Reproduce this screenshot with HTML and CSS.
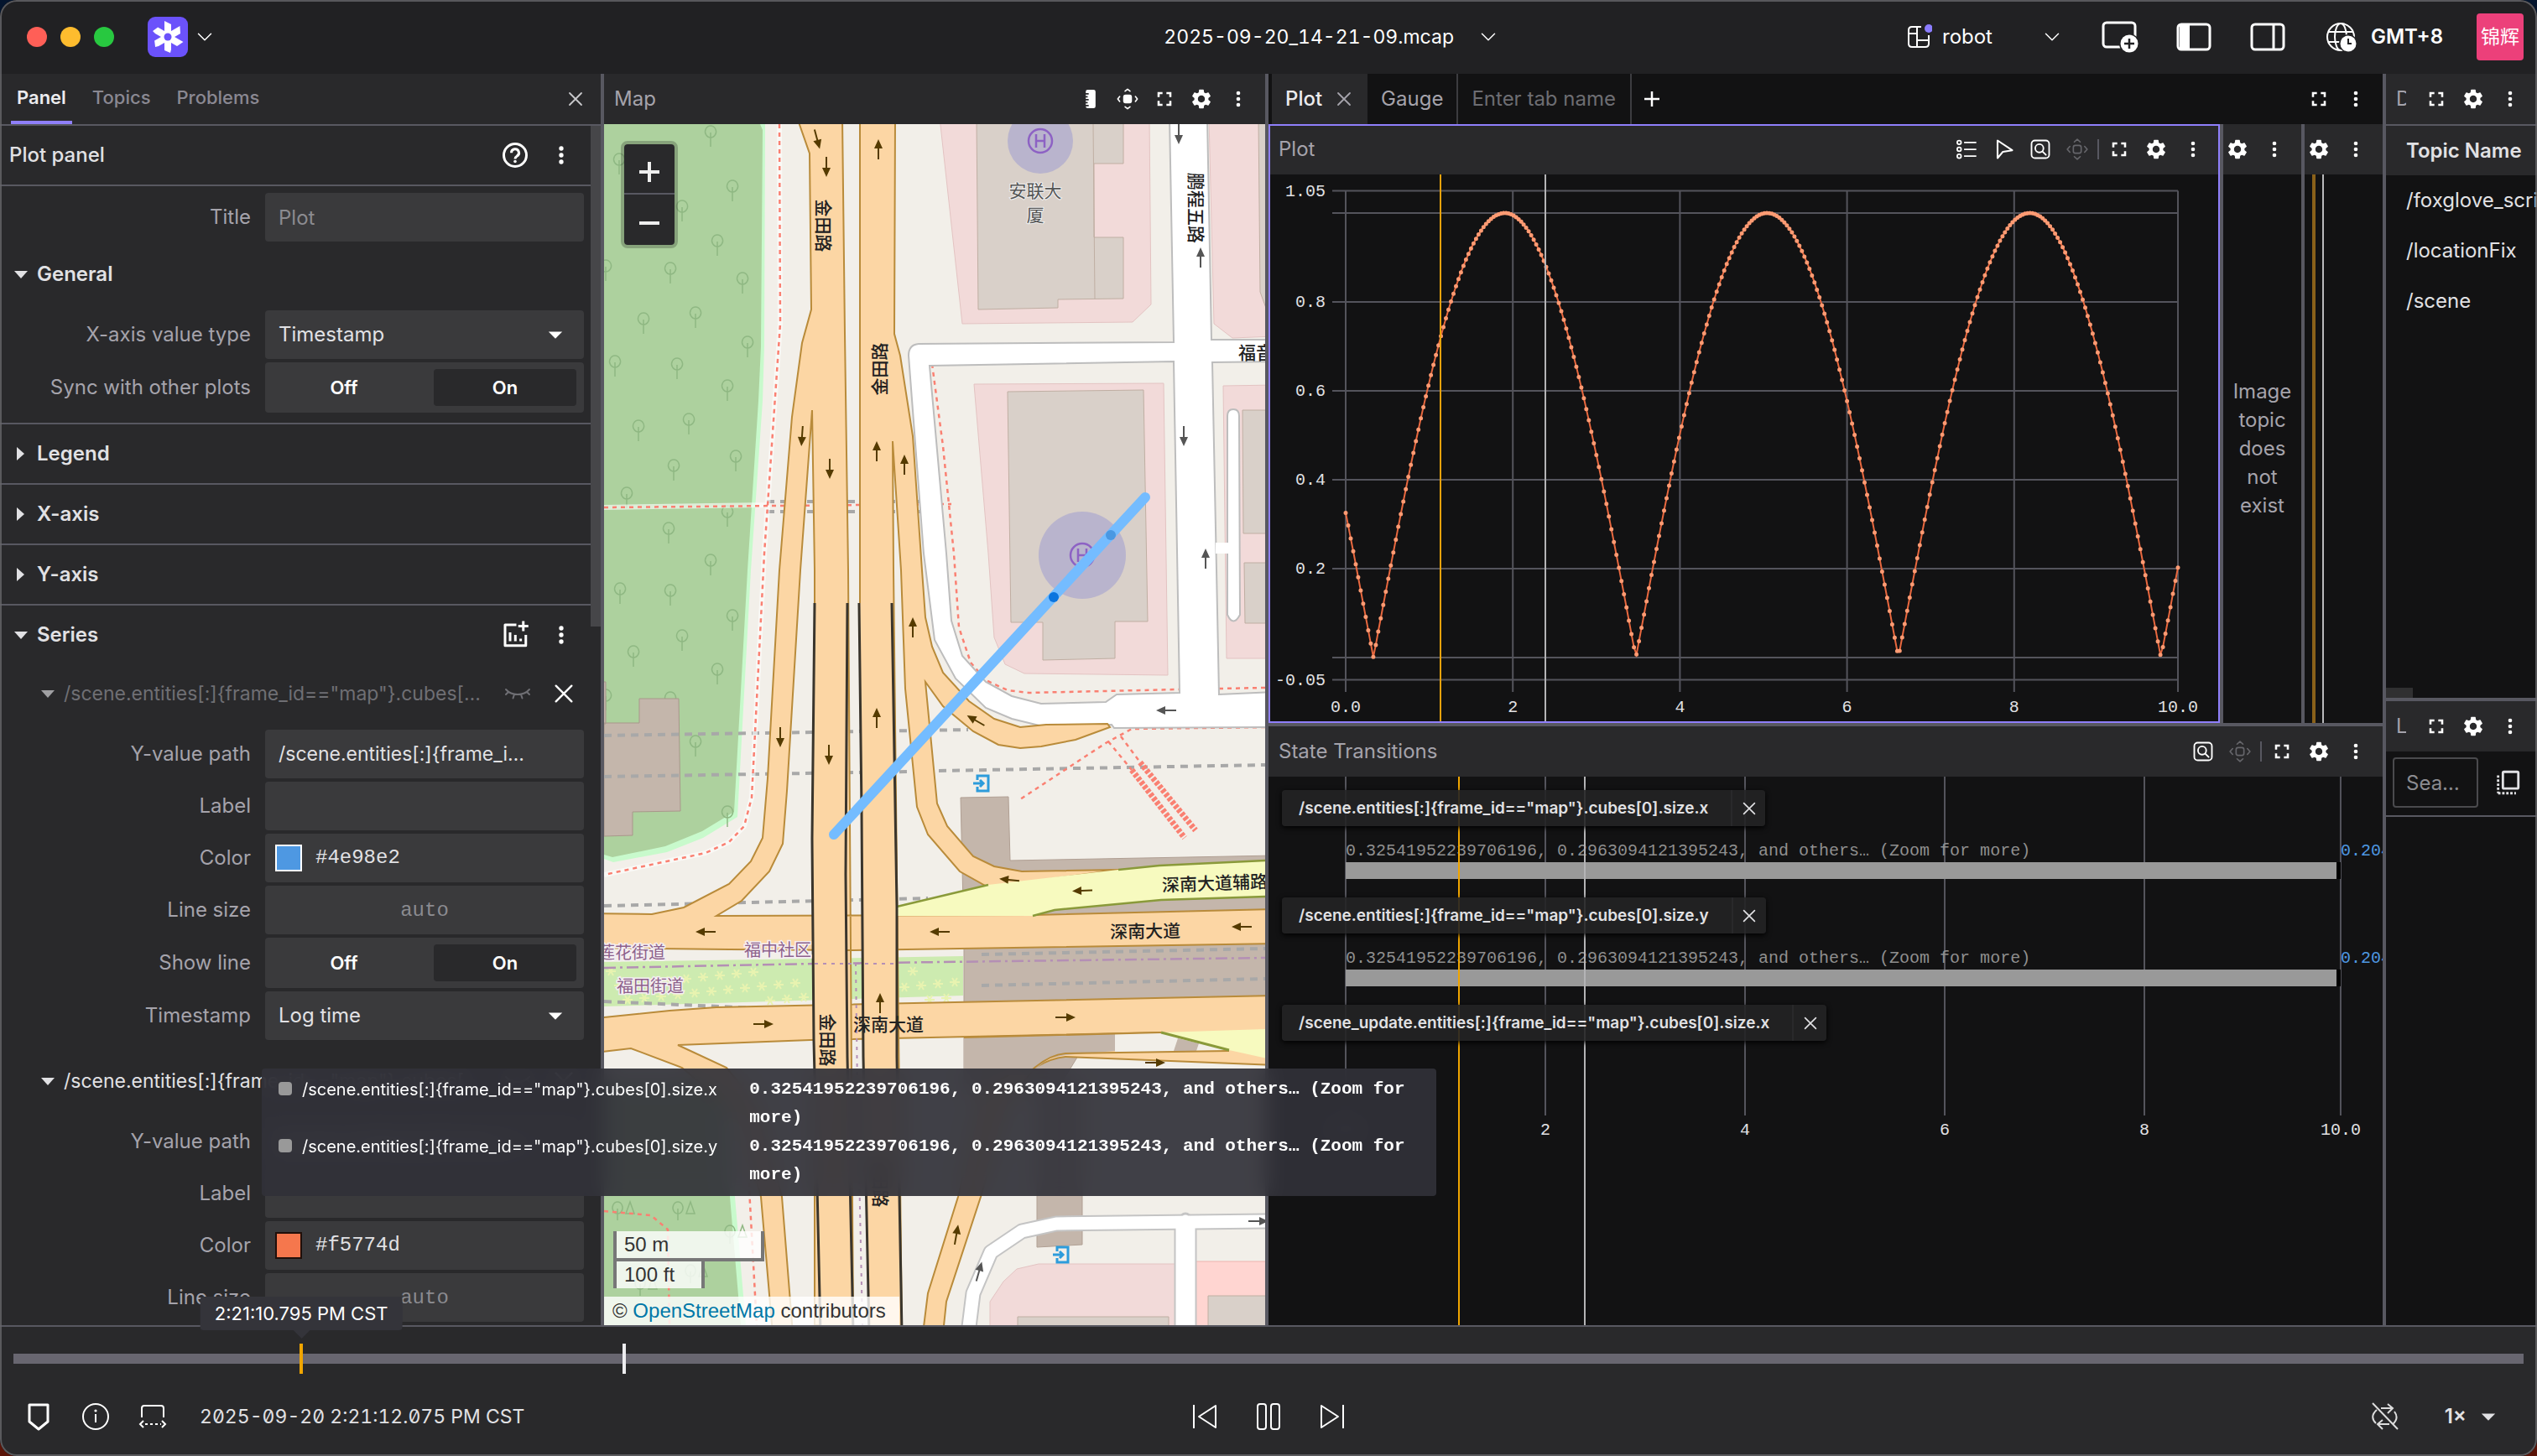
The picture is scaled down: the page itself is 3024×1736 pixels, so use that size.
FILE: index.html
```html
<!DOCTYPE html>
<html lang="en">
<head>
<meta charset="utf-8">
<title>2025-09-20_14-21-09.mcap</title>
<link rel="stylesheet" href="styles.css">
</head>
<body>
<svg class="symbols" aria-hidden="true">
  <symbol id="i-gear" viewBox="0 0 24 24"><path fill="currentColor" d="M19.14 12.94c.04-.3.06-.61.06-.94 0-.32-.02-.64-.07-.94l2.03-1.58c.18-.14.23-.41.12-.61l-1.92-3.32c-.12-.22-.37-.29-.59-.22l-2.39.96c-.5-.38-1.03-.7-1.62-.94l-.36-2.54c-.04-.24-.24-.41-.48-.41h-3.84c-.24 0-.43.17-.47.41l-.36 2.54c-.59.24-1.13.57-1.62.94l-2.39-.96c-.22-.08-.47 0-.59.22L2.74 8.87c-.12.21-.08.47.12.61l2.03 1.58c-.05.3-.09.63-.09.94s.02.64.07.94l-2.03 1.58c-.18.14-.23.41-.12.61l1.92 3.32c.12.22.37.29.59.22l2.39-.96c.5.38 1.03.7 1.62.94l.36 2.54c.05.24.24.41.48.41h3.84c.24 0 .44-.17.47-.41l.36-2.54c.59-.24 1.13-.56 1.62-.94l2.39.96c.22.08.47 0 .59-.22l1.92-3.32c.12-.22.07-.47-.12-.61l-2.01-1.58zM12 15.6c-1.98 0-3.6-1.62-3.6-3.6s1.62-3.6 3.6-3.6 3.6 1.62 3.6 3.6-1.62 3.6-3.6 3.6z"/></symbol>
  <symbol id="i-more" viewBox="0 0 24 24"><g fill="currentColor"><circle cx="12" cy="6" r="2"/><circle cx="12" cy="12" r="2"/><circle cx="12" cy="18" r="2"/></g></symbol>
  <symbol id="i-full" viewBox="0 0 24 24"><path fill="none" stroke="currentColor" stroke-width="2.2" d="M6 10V6h4M14 6h4v4M18 14v4h-4M10 18H6v-4"/></symbol>
  <symbol id="i-close" viewBox="0 0 24 24"><path fill="none" stroke="currentColor" stroke-width="1.8" stroke-linecap="round" d="M5 5l14 14M19 5L5 19"/></symbol>
  <symbol id="i-down" viewBox="0 0 24 24"><path fill="none" stroke="currentColor" stroke-width="2" stroke-linecap="round" stroke-linejoin="round" d="M2 7l10 10L22 7"/></symbol>
  <symbol id="i-caret" viewBox="0 0 24 24"><path fill="currentColor" d="M5 9h14l-7 7z"/></symbol>
  <symbol id="i-help" viewBox="0 0 24 24"><circle cx="12" cy="12" r="9" fill="none" stroke="currentColor" stroke-width="2"/><path fill="none" stroke="currentColor" stroke-width="2" d="M9 10.2a3 3 0 1 1 4.4 2.6c-1 .6-1.4 1-1.4 2.2"/><circle cx="12" cy="17" r="1.2" fill="currentColor"/></symbol>
  <symbol id="i-addchart" viewBox="0 0 24 24"><path fill="none" stroke="currentColor" stroke-width="2" stroke-linejoin="round" d="M13 4H4v16.500h16.500V12M8 10v7M12.200 12v5M16.400 15v2"/><path stroke="currentColor" stroke-width="2" d="M18.500 1v8M14.500 5h8"/></symbol>
  <symbol id="i-eyeoff" viewBox="0 0 32 24"><path fill="none" stroke="currentColor" stroke-width="2" stroke-linecap="round" d="M2 7c7 8 21 8 28 0M5 10l-3 3M12 13l-1.500 4.500M20 13l1.500 4.500M27 10l3 3"/></symbol>
  <symbol id="i-ruler" viewBox="0 0 24 24"><path fill="currentColor" fill-rule="evenodd" d="M9 2.500h6q2 0 2 2v15q0 2-2 2H9q-2 0-2-2v-15q0-2 2-2zM7 6h3v1.400H7zM7 9h2v1.400H7zM7 12h3v1.400H7zM7 15h2v1.400H7zM7 18h3v1.400H7z"/></symbol>
  <symbol id="i-target" viewBox="0 0 24 24"><rect x="7.500" y="7.500" width="9" height="9" rx="2.500" fill="currentColor"/><path fill="none" stroke="currentColor" stroke-width="1.400" stroke-linecap="round" stroke-linejoin="round" d="M9.500 4L12 2l2.500 2M9.500 20L12 22l2.500-2M4 9.500L2 12l2 2.500M20 9.500L22 12l-2 2.500"/></symbol>
  <symbol id="i-pan" viewBox="0 0 24 24"><rect x="8" y="8" width="8" height="8" rx="2" fill="none" stroke="currentColor" stroke-width="1.400"/><path fill="none" stroke="currentColor" stroke-width="1.400" stroke-linecap="round" stroke-linejoin="round" d="M9 4.500L12 1.800l3 2.700M9 19.500l3 2.700 3-2.700M4.500 9L1.800 12l2.700 3M19.500 9l2.700 3-2.700 3"/></symbol>
  <symbol id="i-zoom" viewBox="0 0 24 24"><g fill="none" stroke="currentColor" stroke-width="1.600" stroke-linecap="round"><rect x="3" y="3" width="18" height="18" rx="3.500"/><circle cx="11" cy="11" r="4.200"/><path d="M14.200 14.200l3.500 3.500"/></g></symbol>
  <symbol id="i-pointer" viewBox="0 0 24 24"><path fill="none" stroke="currentColor" stroke-width="1.800" stroke-linejoin="round" d="M6 3v18l5.500-6.500L21 13z"/></symbol>
  <symbol id="i-legend" viewBox="0 0 24 24"><g fill="none" stroke="currentColor" stroke-width="1.500"><circle cx="4.500" cy="5" r="2"/><circle cx="4.500" cy="12" r="2"/><circle cx="4.500" cy="19" r="2"/><path d="M9.500 5H22M9.500 12H22M9.500 19H22"/></g></symbol>
  <symbol id="i-copy" viewBox="0 0 24 24"><g fill="none" stroke="currentColor" stroke-width="2"><rect x="8" y="3" width="13" height="14" rx="1"/><path stroke-dasharray="2 1.400" d="M4 6v15M4 21h15"/></g></symbol>
</svg>

<div class="app">
  <header class="titlebar">
    <div class="titlebar-left">
      <span class="light light-red"></span><span class="light light-yellow"></span><span class="light light-green"></span>
      <button class="logo" aria-label="Menu">
        <svg width="48" height="48" viewBox="0 0 48 48"><rect width="48" height="48" rx="9" fill="#6b52fb"/><g fill="#fff"><path d="M20 5l8 4v30l-1 4-7-3z"/><path d="M20 5l8 4v30l-1 4-7-3z" transform="rotate(60 24 24)"/><path d="M20 5l8 4v30l-1 4-7-3z" transform="rotate(120 24 24)"/></g><circle cx="24" cy="24" r="4.500" fill="#6b52fb"/></svg>
        <svg class="chev"><use href="#i-down"/></svg>
      </button>
    </div>
    <button class="file">2025-09-20_14-21-09.mcap<svg class="chev"><use href="#i-down"/></svg></button>
    <div class="titlebar-right">
      <button class="layout">
        <svg width="32" height="32" viewBox="0 0 32 32"><g fill="none" stroke="#fff" stroke-width="2"><path d="M19 4H8q-4 0-4 4v16q0 4 4 4h16q4 0 4-4V14"/><path d="M14 4v24M4 12h10M14 20h14"/></g><circle cx="28" cy="6" r="5" fill="#8b7cff"/></svg>
        <span>robot</span><svg class="chev"><use href="#i-down"/></svg>
      </button>
      <button class="wide" aria-label="Add panel"><svg width="44" height="40" viewBox="0 0 44 40"><rect x="2" y="3" width="38" height="29" rx="4" fill="none" stroke="#fff" stroke-width="3"/><circle cx="33" cy="28" r="12" fill="#212123"/><circle cx="33" cy="28" r="10.500" fill="#fff"/><path d="M33 22v12M27 28h12" stroke="#212123" stroke-width="2.500"/></svg></button>
      <button class="wide" aria-label="Left sidebar"><svg width="42" height="34" viewBox="0 0 42 34"><rect x="2" y="2" width="38" height="30" rx="4" fill="none" stroke="#fff" stroke-width="3"/><path d="M4 2h12v30H4z" fill="#fff"/></svg></button>
      <button class="wide" aria-label="Right sidebar"><svg width="42" height="34" viewBox="0 0 42 34"><rect x="2" y="2" width="38" height="30" rx="4" fill="none" stroke="#fff" stroke-width="3"/><path d="M28 2v30" stroke="#fff" stroke-width="3"/></svg></button>
      <button class="zone"><svg width="38" height="38" viewBox="0 0 38 38"><g fill="none" stroke="#fff" stroke-width="2"><circle cx="18" cy="19" r="16"/><ellipse cx="18" cy="19" rx="7" ry="16"/><path d="M3 13h30M3 25h30"/></g><circle cx="27" cy="27" r="11" fill="#212123"/><circle cx="27" cy="27" r="9.500" fill="#fff"/><path d="M27 21v6h4" fill="none" stroke="#212123" stroke-width="2"/></svg>GMT+8</button>
      <button class="avatar">锦辉</button>
    </div>
  </header>

  <main class="workspace">
    <aside class="sidebar">
      <nav class="side-tabs">
        <button class="side-tab active">Panel</button><button class="side-tab">Topics</button><button class="side-tab">Problems</button>
        <button class="side-close" aria-label="Close"><svg class="i24"><use href="#i-close"/></svg></button>
      </nav>
      <div class="side-scroll">
        <div class="side-content">
          <div class="panel-head"><span>Plot panel</span><button class="sbtn"><svg class="i36"><use href="#i-help"/></svg></button><button class="sbtn"><svg class="i32"><use href="#i-more"/></svg></button></div>
          <div class="fields top">
            <label for="f-title">Title</label><input class="ctl" id="f-title" placeholder="Plot">
          </div>
          <section class="group">
            <button class="sec open"><i></i>General</button>
            <div class="fields">
              <label for="f-x">X-axis value type</label><span class="sel"><select class="ctl" id="f-x"><option>Timestamp</option></select><svg class="i28"><use href="#i-caret"/></svg></span>
              <span class="lab">Sync with other plots</span><div class="toggle"><button>Off</button><button class="on">On</button></div>
            </div>
          </section>
          <section class="group line"><button class="sec"><i></i>Legend</button></section>
          <section class="group line"><button class="sec"><i></i>X-axis</button></section>
          <section class="group line"><button class="sec"><i></i>Y-axis</button></section>
          <section class="group line">
            <div class="sec-row"><button class="sec open"><i></i>Series</button><button class="sbtn"><svg class="i36"><use href="#i-addchart"/></svg></button><button class="sbtn"><svg class="i32"><use href="#i-more"/></svg></button></div>
            <div class="sec-row sub dim"><button class="sec open"><i></i><span>/scene.entities[:]{frame_id=="map"}.cubes[0].size.x</span></button><button class="sbtn"><svg class="i32"><use href="#i-eyeoff"/></svg></button><button class="sbtn bright"><svg class="i32"><use href="#i-close"/></svg></button></div>
            <div class="fields">
              <label for="a-y">Y-value path</label><input class="ctl path" id="a-y" value='/scene.entities[:]{frame_id=="map"}.cubes[0].size.x'>
              <label for="a-l">Label</label><input class="ctl" id="a-l">
              <label for="a-c">Color</label><span class="color"><input type="color" value="#4e98e2" aria-label="Swatch"><input class="mono" id="a-c" value="#4e98e2"></span>
              <label for="a-s">Line size</label><input class="ctl num" id="a-s" placeholder="auto">
              <span class="lab">Show line</span><div class="toggle"><button>Off</button><button class="on">On</button></div>
              <label for="a-t">Timestamp</label><span class="sel"><select class="ctl" id="a-t"><option>Log time</option></select><svg class="i28"><use href="#i-caret"/></svg></span>
            </div>
            <div class="sec-row sub next"><button class="sec open"><i></i><span>/scene.entities[:]{frame_id=="map"}.cubes[0].size.x</span></button><button class="sbtn"><svg class="i32"><use href="#i-eyeoff"/></svg></button><button class="sbtn bright"><svg class="i32"><use href="#i-close"/></svg></button></div>
            <div class="fields">
              <label for="b-y">Y-value path</label><input class="ctl path" id="b-y" value='/scene.entities[:]{frame_id=="map"}.cubes[0].size.x'>
              <label for="b-l">Label</label><input class="ctl" id="b-l">
              <label for="b-c">Color</label><span class="color dark"><input type="color" value="#f5774d" aria-label="Swatch"><input class="mono" id="b-c" value="#f5774d"></span>
              <label for="b-s">Line size</label><input class="ctl num" id="b-s" placeholder="auto">
            </div>
          </section>
        </div>
        <div class="scrollbar"><div class="thumb"></div></div>
      </div>
    </aside>

    <section class="map-panel">
      <header class="phead"><h2>Map</h2><button><svg><use href="#i-ruler"/></svg></button><button><svg><use href="#i-target"/></svg></button><button><svg><use href="#i-full"/></svg></button><button><svg><use href="#i-gear"/></svg></button><button><svg><use href="#i-more"/></svg></button></header>
      <div class="map">
        <svg class="canvas" viewBox="720 148 788 1432" preserveAspectRatio="xMinYMin slice">
          <rect x="720" y="148" width="788" height="1432" fill="#f2efe9"/>
          <!-- park -->
          <path fill="#c8facc" d="M720 148H912L911 413 909 478 895 680 879 974 838 999 795 1016 731 1028 720 1024z"/>
          <path fill="#add19e" d="M720 148H906L909 155 907 413 904 478 891 680 875 968 837 991 793 1009 730 1022 720 1019z"/>
          <path fill="#c8facc" d="M720 1290H868L876 1427 889 1580H720z"/>
          <path fill="#add19e" d="M720 1290H862L870 1427 883 1580H720z"/>
          <g id="trees" fill="none" stroke="#8fb883" stroke-width="1.500"></g>
          <path fill="#c4b6ab" stroke="#a9978b" d="M720 862H762V833H809L811 967 754 968V996L720 997zM718 813h4v50h-4z"/>
          <!-- blocks and buildings -->
          <g fill="#f2dad9" stroke="#e3c3c2">
            <path d="M1120 140L1147 386 1350 384 1372 363 1370 140z"/>
            <path d="M1441 140L1447 386 1469 403 1520 401V140z"/>
            <path d="M1161 458L1387 457 1392 805 1221 803 1198 792 1185 760 1178 660z"/>
            <path d="M1458 460L1520 459V785H1462z"/>
            <path d="M1180 1590V1552L1196 1528 1212 1513 1238 1507H1402V1590z"/>
          </g>
          <path fill="#ffd5d1" stroke="#eeb3ae" d="M1424 1504H1520V1590H1424z"/>
          <g fill="#d9d0c9" stroke="#bfaea2">
            <path d="M1164 140L1166 369 1261 367V357L1339 356V283H1304V195H1339V140z"/><path fill="none" d="M1303 148L1305 356"/>
            <path d="M1500 140L1502 348 1510 370V140z"/>
            <path d="M1201 467L1363 465 1368 741H1329V785L1243 787V742H1205z"/>
            <path d="M1481 489H1520V636H1482zM1483 671H1520V743H1484z"/>
            <path d="M1213 1570H1393V1590H1213zM1440 1545H1520V1590H1440z"/>
          </g>
          <g fill="#c4b6ab" stroke="#b09f93">
            <path d="M1145 951L1202 950 1204 1026 1520 1020V1231L1329 1233V1254H1288L1260 1300 1149 1300 1149 1120z"/>
            <path d="M1236 1290h54v194l-54 3z"/>
          </g>
          <path fill="#cdebb0" d="M720 1147L1148 1140V1187L720 1200z"/>
          <g id="scrub" stroke="#e8f3b0" stroke-width="2"></g>
          <!-- tunnels and boundaries -->
          <g fill="none" stroke="#a8a8a8" stroke-width="4" stroke-dasharray="9 7">
            <path d="M720 877L1154 870M720 926L1081 920M1119 919L1508 912M720 1080L1106 1071M1170 1138L1508 1131M1170 1175L1508 1167M720 1194L902 1202M914 598H1100M914 610H1100"/>
          </g>
          <path fill="none" stroke="#b48fb5" stroke-width="2.500" stroke-dasharray="14 5 3 5" d="M720 1154L971 1149 1508 1142"/>
          <g fill="none" stroke="#fff" stroke-width="6" opacity=".6"><path d="M929 148L930 386 911 660 896 951 887 985 869 1004 841 1017 720 1043M720 605L914 602"/></g>
          <g fill="none" stroke="#fa8072" stroke-width="2.500" stroke-dasharray="5 5">
            <path d="M929 148L930 386 911 660 896 951 887 985 869 1004 841 1017 720 1043"/>
            <path d="M720 605L1134 601"/>
            <path d="M1111 434L1124 532 1137 660 1143 748 1157 790 1175 811 1201 823 1226 826 1405 822M1453 821L1508 820"/>
            <path d="M1508 867L1349 869 1318 886 1216 953M1321 884L1349 918M1336 878L1359 909"/>
            <path d="M720 1444L776 1449 796 1466 798 1580M886 1290L902 1580"/>
          </g>
          <g fill="none" stroke="#fa8072" stroke-width="7" stroke-dasharray="4 2"><path d="M1349 918L1412 999M1359 909L1425 990"/></g>
          <!-- residential roads -->
          <g fill="#fff" stroke="#bdbdbd" stroke-width="2">
            <path d="M1394 140L1399 408 1095 410Q1083 411 1083 424L1101 660 1114 763 1139 809 1175 844 1206 857 1247 867 1325 864 1328 868 1520 867V825L1453 828 1445 432 1520 431V405H1444L1439 140zM1108 436L1399 431 1406 826 1331 828 1318 837 1241 839 1206 830 1175 813 1147 782 1134 740 1128 660z" fill-rule="evenodd"/>
            <path d="M1463 733V496Q1463 488 1470 488T1477 496L1478 733Q1470 748 1463 733z"/>
          </g>
          <path fill="#fff" d="M1449 647h18v13h-18z"/>
          <g fill="none" stroke-linejoin="round"><path stroke="#c4c4c4" stroke-width="19" d="M1154 1590L1160 1542 1181 1493 1218 1468 1259 1459 1510 1456"/><path stroke="#c4c4c4" stroke-width="27" d="M1413 1460V1590"/><circle cx="1413" cy="1453" r="6" fill="#fff" stroke="#c4c4c4" stroke-width="3"/><path stroke="#fff" stroke-width="15" d="M1154 1590L1160 1542 1181 1493 1218 1468 1259 1459 1510 1456"/><path stroke="#fff" stroke-width="23" d="M1413 1456V1590"/></g>
          <!-- main roads -->
          <path fill="#fcd6a4" stroke="#b98b3a" stroke-width="2" d="M710 1214L798 1205 854 1201 1520 1187V1270L1270 1260Q1250 1262 1231 1275L1200 1320 1169 1427 1128 1552 1124 1590H1100L1106 1542 1142 1427 1170 1300 1250 1255 1384 1231 966 1240 808 1246 866 1273 905 1320 932 1427 945 1590H921L907 1427 880 1330 813 1273 752 1250 710 1255z"/>
          <path fill="#c4b6ab" d="M1149 1237L1329 1233V1253L1270 1258 1250 1262 1225 1282 1149 1282z"/>
          <path fill="#f2efe9" d="M1329 1233L1384 1231 1465 1252 1329 1255z"/><path fill="#c4b6ab" d="M1404 1238L1429 1244 1426 1253H1399z"/>
          <path fill="none" stroke="#b98b3a" stroke-width="2" d="M1149 1237L1384 1231M1231 1275Q1250 1258 1270 1256L1465 1253"/>
          <path fill="#f7fabf" d="M1384 1231L1510 1227V1262L1465 1252z"/><path stroke="#8a9a3a" stroke-width="3" d="M1384 1231L1465 1252"/>
          <path fill="#fcd6a4" stroke="#b98b3a" stroke-width="2" d="M950 140L965 183 967 369 956 409 944 497 929 680 915 928 909 999 895 1027 869 1054 815 1082 777 1090 710 1089V1130L869 1132 1017 1133 1520 1125V1084L1231 1091 854 1092 884 1074 917 1039 933 1006 938 943 954 680 968 489 971 680V1580H1017L1011 680 1007 398 1004 140z"/>
          <path fill="#fcd6a4" stroke="#b98b3a" stroke-width="2" d="M1025 140V719L1036 1590H1075L1065 680 1064 526 1074 680 1079 821 1093 962 1106 995 1144 1039 1178 1058 1333 1037 1218 1039 1185 1033 1160 1021 1129 985 1117 958 1103 813 1124 842 1160 872 1190 888 1216 892 1241 890 1282 882 1323 867 1320 863 1247 864 1216 867 1185 857 1155 836 1124 802 1111 771 1103 736 1099 680 1088 520 1073 424 1066 398 1067 140z"/>
          <path fill="#f7fabf" d="M1069 1081L1178 1055 1333 1037 1382 1032 1520 1026V1069L1384 1073 1257 1085 1231 1092H1069z"/>
          <path fill="none" stroke="#8a9a3a" stroke-width="2.500" d="M1069 1081L1178 1055M1333 1037L1382 1032 1510 1026M1231 1092L1257 1085 1384 1073 1510 1069"/>
          <path fill="#fcd6a4" d="M971 719H1011L1008 1043 1010 1260 1017 1590H978L969 1200 968 1000zM1024 719H1063L1069 1081V1260L1075 1590H1036L1029 1260 1027 966z"/>
          <path fill="none" stroke="#3a352c" stroke-width="3" d="M971 719L968 1000 970 1240 978 1590M1010 719L1008 1043 1010 1260 1017 1590M1024 719L1027 966 1029 1260 1036 1590M1063 719L1069 1081V1260L1075 1590"/>
          <path fill="none" stroke="#b48fb5" stroke-width="2" stroke-dasharray="4 6" d="M1020 1148L1022 1300 1028 1580M971 1149H1069"/>
          <g id="arrows"></g>
          <!-- helipads -->
          <g fill="#6f74d8" fill-opacity=".3"><circle cx="1240" cy="168" r="39"/><circle cx="1290" cy="662" r="52"/></g>
          <g fill="none" stroke="#8d62c4" stroke-width="2.500"><circle cx="1240" cy="168" r="14"/><path d="M1235 160v16M1245 160v16M1235 168h10"/><circle cx="1290" cy="662" r="14"/><path d="M1285 654v16M1295 654v16M1285 662h10"/></g>
          <g fill="none" stroke="#2d9cdb" stroke-width="3"><path d="M1165 930V925H1178V943H1165V938M1160 934H1172M1168 930L1172 934 1168 938"/><path d="M1260 1492V1487H1273V1505H1260V1500M1255 1496H1267M1263 1492L1267 1496 1263 1500"/></g>
          <!-- place names -->
          <g class="names">
            <text transform="translate(982 269) rotate(90)" dy="8">金田路</text>
            <text transform="translate(1048 440) rotate(-90)" dy="8">金田路</text>
            <text transform="translate(987 1240) rotate(90)" dy="8">金田路</text>
            <text transform="translate(1050 1408) rotate(90)" dy="8">金田路</text>
            <text transform="translate(1426 248) rotate(90)" dy="8">鹏程五路</text>
            <text x="1476" y="428" text-anchor="start">福音路</text>
            <text transform="translate(1365 1110) rotate(-1)" dy="8">深南大道</text>
            <text transform="translate(1385 1055) rotate(-2)" dy="8" text-anchor="start">深南大道辅路</text>
            <text x="1059" y="1229">深南大道</text>
            <g class="soft"><text x="1234" y="235">安联大</text><text x="1234" y="264">厦</text></g>
            <g class="district"><text x="753" y="1143">莲花街道</text><text x="927" y="1140">福中社区</text><text x="775" y="1183">福田街道</text></g>
          </g>
          <!-- GPS track -->
          <path stroke="#74bcff" stroke-width="12" stroke-linecap="round" d="M1365 593L994 995"/>
          <circle cx="1324" cy="638" r="6" fill="#4a98e2"/><circle cx="1256" cy="712" r="6" fill="#0b74de"/>
        </svg>
        <div class="zoom"><button aria-label="Zoom in"><svg width="26" height="26" viewBox="0 0 26 26"><path stroke="#eee" stroke-width="4" d="M13 1v24M1 13h24"/></svg></button><button aria-label="Zoom out"><svg width="26" height="26" viewBox="0 0 26 26"><path stroke="#eee" stroke-width="4" d="M1 13h24"/></svg></button></div>
        <div class="scale"><span class="metric">50 m</span><span class="imperial">100 ft</span></div>
        <div class="credit">© <a href="#osm">OpenStreetMap</a> contributors</div>
      </div>
    </section>

    <section class="stack">
      <nav class="tabs">
        <button class="tab active">Plot<svg class="i24"><use href="#i-close"/></svg></button><button class="tab">Gauge</button><input class="tab-name" placeholder="Enter tab name" aria-label="Enter tab name"><button class="tab-add" aria-label="Add tab"><svg width="18" height="18" viewBox="0 0 18 18"><path stroke="#fff" stroke-width="2.500" d="M9 0v18M0 9h18"/></svg></button>
        <div class="tools"><button><svg><use href="#i-full"/></svg></button><button><svg><use href="#i-more"/></svg></button></div>
      </nav>
      <div class="row">
        <section class="plot-panel">
          <header class="phead"><h2>Plot</h2><button><svg><use href="#i-legend"/></svg></button><button><svg><use href="#i-pointer"/></svg></button><button><svg><use href="#i-zoom"/></svg></button><button class="off"><svg><use href="#i-pan"/></svg></button><span class="sep"></span><button><svg><use href="#i-full"/></svg></button><button><svg><use href="#i-gear"/></svg></button><button><svg><use href="#i-more"/></svg></button></header>
          <div class="chart"><svg class="canvas" id="plot" viewBox="1512 208 1134 654"></svg></div>
        </section>
        <section class="narrow">
          <header class="phead"><button><svg><use href="#i-gear"/></svg></button><button><svg><use href="#i-more"/></svg></button></header>
          <p class="empty">Image topic does not exist</p>
        </section>
        <section class="narrow">
          <header class="phead"><button><svg><use href="#i-gear"/></svg></button><button><svg><use href="#i-more"/></svg></button></header>
          <div class="gauge"><span class="g-hover"></span><span class="g-now"></span></div>
        </section>
      </div>
      <section class="state-panel">
        <header class="phead"><h2>State Transitions</h2><button><svg><use href="#i-zoom"/></svg></button><button class="off"><svg><use href="#i-pan"/></svg></button><span class="sep"></span><button><svg><use href="#i-full"/></svg></button><button><svg><use href="#i-gear"/></svg></button><button><svg><use href="#i-more"/></svg></button></header>
        <div class="states">
          <svg class="canvas" id="states" viewBox="1512 926 1328 654" preserveAspectRatio="xMinYMin meet"></svg>
          <div class="chips">
            <div class="chip"><span>/scene.entities[:]{frame_id=="map"}.cubes[0].size.x</span><button aria-label="Remove"><svg><use href="#i-close"/></svg></button></div>
            <div class="chip"><span>/scene.entities[:]{frame_id=="map"}.cubes[0].size.y</span><button aria-label="Remove"><svg><use href="#i-close"/></svg></button></div>
            <div class="chip"><span>/scene_update.entities[:]{frame_id=="map"}.cubes[0].size.x</span><button aria-label="Remove"><svg><use href="#i-close"/></svg></button></div>
          </div>
        </div>
      </section>
    </section>

    <section class="right">
      <section class="source">
        <header class="phead"><h2>Data Source Info</h2><button><svg><use href="#i-full"/></svg></button><button><svg><use href="#i-gear"/></svg></button><button><svg><use href="#i-more"/></svg></button></header>
        <table class="topics"><thead><tr><th>Topic Name</th></tr></thead><tbody><tr><td>/foxglove_script</td></tr><tr><td>/locationFix</td></tr><tr><td>/scene</td></tr></tbody></table>
        <div class="hscroll"></div>
      </section>
      <section class="log">
        <header class="phead"><h2>Log</h2><button><svg><use href="#i-full"/></svg></button><button><svg><use href="#i-gear"/></svg></button><button><svg><use href="#i-more"/></svg></button></header>
        <div class="search"><input placeholder="Search filter" aria-label="Search filter"><button aria-label="Copy"><svg width="34" height="34"><use href="#i-copy"/></svg></button></div>
      </section>
    </section>
  </main>

  <footer class="playback">
    <div class="timeline">
      <input type="range" min="0" max="1000" value="243" aria-label="Playback position">
      <div class="hover" style="left: 11.47%"><span class="tip">2:21:10.795 PM CST</span></div>
    </div>
    <div class="controls">
      <div class="c-left">
        <button><svg width="32" height="36" viewBox="0 0 32 36"><path fill="none" stroke="#fff" stroke-width="3" stroke-linejoin="round" d="M5 4H27V24L16 33 5 24z"/></svg></button>
        <button><svg width="34" height="34" viewBox="0 0 34 34"><circle cx="17" cy="17" r="15" fill="none" stroke="#fff" stroke-width="2"/><path stroke="#fff" stroke-width="2" d="M17 14v10"/><circle cx="17" cy="10" r="1.600" fill="#fff"/></svg></button>
        <button><svg width="34" height="32" viewBox="0 0 34 32"><path fill="none" stroke="#fff" stroke-width="2" d="M4 17V6q0-3 3-3H27q3 0 3 3V17M6 21L2 25l4 4M28 21l4 4-4 4"/><path stroke="#fff" stroke-width="2" stroke-dasharray="3 3" d="M8 25H27"/></svg></button>
        <span class="clock">2025-09-20 2:21:12.075 PM CST</span>
      </div>
      <div class="c-mid">
        <button aria-label="Previous"><svg width="30" height="32" viewBox="0 0 30 32"><path fill="none" stroke="#fff" stroke-width="2" stroke-linejoin="round" d="M2 2v28M28 3v26L8 16z"/></svg></button>
        <button aria-label="Pause"><svg width="30" height="34" viewBox="0 0 30 34"><g fill="none" stroke="#fff" stroke-width="2"><rect x="2" y="2" width="10" height="30" rx="3"/><rect x="18" y="2" width="10" height="30" rx="3"/></g></svg></button>
        <button aria-label="Next"><svg width="30" height="32" viewBox="0 0 30 32"><path fill="none" stroke="#fff" stroke-width="2" stroke-linejoin="round" d="M28 2v28M2 3v26l20-13z"/></svg></button>
      </div>
      <div class="c-right">
        <button aria-label="Loop"><svg width="34" height="34" viewBox="0 0 34 34"><path fill="none" stroke="#ddd" stroke-width="2" d="M2 1L32 32M12 7H26M20 2l6 5-6 6M22 26H8M14 21l-6 5 6 6M7 9Q-2 17 6 25M28 11q6 8-2 15"/></svg></button>
        <button class="speed">1×<svg class="i28"><use href="#i-caret"/></svg></button>
      </div>
    </div>
  </footer>

  <div class="state-tip">
    <i></i><span>/scene.entities[:]{frame_id=="map"}.cubes[0].size.x</span><b>0.32541952239706196, 0.2963094121395243, and others… (Zoom for more)</b>
    <i></i><span>/scene.entities[:]{frame_id=="map"}.cubes[0].size.y</span><b>0.32541952239706196, 0.2963094121395243, and others… (Zoom for more)</b>
  </div>
</div>
<script src="script.js"></script>
</body>
</html>
```

FILE: styles.css
```css
:root {
  --bar: #29292b;
  --dark: #121213;
  --line: #585861;
  --field: #3a3a3c;
  --text: #e1e1e4;
  --muted: #a5a3ab;
  --accent: #8f7ffb;
}
* { box-sizing: border-box; }
html, body { height: 100%; }
body {
  margin: 0;
  background: linear-gradient(180deg, #04152e 50%, #5a1408 50%);
  color: var(--text);
  font: 24px/32px Inter, "Noto Sans CJK SC", sans-serif;
  overflow: hidden;
}
button, input, select { font: inherit; color: inherit; border: 0; padding: 0; margin: 0; background: none; outline: none; border-radius: 0; min-width: 0; }
button { display: inline-flex; align-items: center; justify-content: center; flex: none; }
svg { flex: none; display: block; }
h2 { margin: 0; font-size: 24px; font-weight: 400; }
.symbols { position: absolute; width: 0; height: 0; }
.i24 { width: 24px; height: 24px; }
.i28 { width: 28px; height: 28px; }
.i32 { width: 32px; height: 32px; }
.i36 { width: 36px; height: 36px; }
.chev { width: 18px; height: 18px; }

.app { position: relative; height: 100vh; display: flex; flex-direction: column; background: var(--bar); border-radius: 20px; overflow: hidden; }
.app::after { content: ""; position: absolute; inset: 0; border: 2px solid #66666a; border-radius: 20px; pointer-events: none; opacity: .8; }

/* title bar */
.titlebar { display: flex; align-items: center; height: 88px; background: #212123; color: #fff; flex: none; }
.titlebar-left { flex: 1383 1 0; display: flex; align-items: center; gap: 16px; padding-left: 32px; }
.light { width: 24px; height: 24px; border-radius: 50%; }
.light-red { background: #ff5f57; }
.light-yellow { background: #febc2e; }
.light-green { background: #28c840; }
.logo { margin-left: 24px; gap: 11px; }
.file { gap: 32px; font-size: 23px; font-variant-numeric: tabular-nums; }
.titlebar-right { flex: 1250 1 0; display: flex; align-items: center; justify-content: flex-end; padding-right: 16px; }
.layout { width: 184px; margin-right: 28px; }
.layout span { margin: 0 auto 0 12px; }
.wide { width: 88px; }
.zone { width: 165px; gap: 16px; font-weight: 600; margin-right: 40px; justify-content: flex-end; }
.avatar { width: 56px; height: 56px; border-radius: 4px; background: #ec407a; font-size: 23px; }

/* work area */
.workspace { flex: 1; min-height: 0; display: flex; gap: 4px; background: var(--line); }
.sidebar { flex: 0 0 716px; background: var(--bar); display: flex; flex-direction: column; min-height: 0; }
.side-tabs { height: 62px; border-bottom: 2px solid var(--line); display: flex; padding: 0 18px 0 13px; flex: none; gap: 17px; }
.side-tab { font-size: 22px; font-weight: 500; color: #8a8892; padding: 0 7px; border-bottom: 4px solid transparent; }
.side-tab.active { color: #ececef; border-color: var(--accent); font-weight: 600; }
.side-close { margin-left: auto; color: #c9c9cc; }
.side-scroll { flex: 1; min-height: 0; display: grid; grid-template-columns: 1fr 12px; overflow: hidden; }
.side-content { min-width: 0; }
.scrollbar { min-height: 0; }
.thumb { height: 597px; background: #464649; }
.panel-head { height: 72px; border-bottom: 2px solid var(--line); display: flex; align-items: center; padding: 0 8px 0 11px; }
.panel-head span { flex: 1; font-weight: 500; }
.sbtn { width: 55px; height: 48px; color: #fff; }
.fields { display: grid; grid-template-columns: 299px 380px; column-gap: 17px; row-gap: 4px; align-items: stretch; }
.fields.top { padding: 8px 0 4px; }
.fields label, .lab { color: var(--muted); text-align: right; align-self: center; }
.ctl { width: 100%; height: 58px; background: var(--field); border-radius: 4px; padding: 0 16px; display: block; }
.ctl::placeholder { color: #8b8b90; opacity: 1; }
.path { padding-right: 60px; text-overflow: ellipsis; font-size: 23px; }
.num { text-align: center; font-family: "Liberation Mono", monospace; }
.sel { position: relative; }
.sel select { appearance: none; }
.sel svg { position: absolute; right: 20px; top: 15px; color: #fff; pointer-events: none; }
.toggle { height: 60px; background: var(--field); border-radius: 4px; display: grid; grid-template-columns: 1fr 1fr; gap: 22px; padding: 8px 9px; font-size: 22px; font-weight: 600; color: #fff; }
.toggle .on { background: var(--bar); border-radius: 4px; }
.color { height: 58px; background: var(--field); border-radius: 4px; display: flex; align-items: center; gap: 16px; padding-left: 12px; }
.color input[type="color"] { width: 32px; height: 32px; border: 2px solid #fff; appearance: none; flex: none; }
.color input[type="color"]::-webkit-color-swatch-wrapper { padding: 0; }
.color input[type="color"]::-webkit-color-swatch { border: 0; border-radius: 0; }
.color.dark input[type="color"] { border-color: #200f0a; }
.mono { flex: 1; font-family: "Liberation Mono", monospace; }
.group.line { border-top: 2px solid var(--line); }
.group:not(.line) { padding-bottom: 12px; }
.group:not(.line) .sec, .sub { margin-bottom: 8px; }
.sec { height: 70px; font-weight: 600; justify-content: flex-start; padding-left: 16px; gap: 11px; min-width: 0; }
.sec i { width: 17px; height: 20px; flex: none; display: inline-flex; align-items: center; justify-content: center; }
.sec i::before { content: ""; border-left: 9px solid var(--text); border-top: 8px solid transparent; border-bottom: 8px solid transparent; }
.sec.open i::before { border-top: 9px solid var(--text); border-left: 8px solid transparent; border-right: 8px solid transparent; border-bottom: 0; }
.sec-row { display: flex; align-items: center; padding-right: 8px; }
.sec-row .sec { flex: 1; }
.sub { padding-right: 5px; }
.sub .sec { padding-left: 48px; padding-right: 10px; font-weight: 400; font-size: 23px; }
.sub span { overflow: hidden; text-overflow: ellipsis; white-space: nowrap; }
.sub.next { margin-top: 14px; }
.dim { color: #6f6f74; }
.dim .sec i { opacity: .65; }
.dim .sbtn:not(.bright) { color: #6f6f74; }

/* panels */
.phead { height: 60px; flex: none; background: var(--bar); display: flex; align-items: center; padding: 0 10px 0 12px; color: #fff; overflow: hidden; }
.phead h2 { flex: 1; min-width: 0; overflow: hidden; white-space: nowrap; color: var(--muted); margin-right: 14px; }
.phead button, .tools button { width: 44px; height: 44px; }
.phead svg, .tools svg { width: 28px; height: 28px; }
.phead .off { color: #66666b; }
.sep { width: 2px; height: 24px; margin: 0 2px; background: var(--line); flex: none; }
.canvas { position: absolute; inset: 0; width: 100%; height: 100%; }

.map-panel { flex: 788 1 0; min-width: 0; display: flex; flex-direction: column; }
.map { flex: 1; position: relative; overflow: hidden; }
.names { font: 500 21px "Noto Sans CJK SC", sans-serif; fill: #222; text-anchor: middle; }
.names .soft { fill: #555; font-weight: 400; paint-order: stroke; stroke: #eee; stroke-width: 2px; }
.names .district { font-size: 20px; font-weight: 400; fill: #8d618b; paint-order: stroke; stroke: #f4eef2; stroke-width: 3px; }
.zoom { position: absolute; left: 20px; top: 20px; width: 68px; border: 4px solid rgba(0, 0, 0, .22); border-radius: 8px; background-clip: padding-box; }
.zoom button { width: 60px; height: 60px; padding-top: 8px; background: var(--bar); display: flex; border-radius: 0 0 4px 4px; }
.zoom button:first-child { border-bottom: 2px solid var(--line); border-radius: 4px 4px 0 0; }
.scale { position: absolute; left: 11px; bottom: 44px; display: flex; flex-direction: column; align-items: flex-start; color: #333; font: 24px/32px "Liberation Sans", sans-serif; }
.scale span { height: 36px; padding-left: 9px; background: rgba(255, 255, 255, .8); border: 4px solid #777; border-top: 0; }
.scale .metric { width: 180px; }
.scale .imperial { width: 109px; height: 32px; border-bottom: 0; }
.credit { position: absolute; left: 0; bottom: 0; height: 34px; padding: 0 16px 0 10px; background: rgba(255, 255, 255, .8); color: #333; font: 24px/34px "Liberation Sans", sans-serif; }
.credit a { color: #0078a8; text-decoration: none; }

.stack { flex: 1328 1 0; min-width: 0; display: flex; flex-direction: column; }
.tabs { height: 60px; flex: none; background: var(--dark); display: flex; padding-left: 4px; }
.tab { color: var(--muted); padding: 0 16px; border-right: 2px solid #3c3c40; }
.tab.active { background: var(--bar); color: #ececef; font-weight: 500; gap: 14px; border: 0; }
.tab.active svg { color: var(--muted); }
.tab-name { width: 207px; padding: 0 16px; border-right: 2px solid #3c3c40; }
.tab-name::placeholder { color: #6d6d72; opacity: 1; }
.tab-add { width: 48px; }
.tools { margin-left: auto; display: flex; align-items: center; padding-right: 10px; color: #fff; }
.row { flex: 1 1 0; min-height: 0; display: flex; gap: 4px; margin-bottom: 4px; }
.plot-panel { flex: 1; min-width: 0; position: relative; display: flex; flex-direction: column; background: var(--dark); }
.plot-panel::after { content: ""; position: absolute; inset: 0; border: 2px solid var(--accent); pointer-events: none; }
.chart, .states { flex: 1; position: relative; min-height: 0; overflow: hidden; }
.narrow { flex: 0 0 93px; min-width: 0; background: var(--dark); display: flex; flex-direction: column; overflow: hidden; }
.narrow .phead { padding-left: 0; justify-content: flex-end; }
.empty { margin: auto; width: 80px; text-align: center; color: var(--muted); line-height: 34px; }
.gauge { flex: 1; display: flex; padding-left: 9px; gap: 8px; }
.g-hover { width: 4px; background: #8a611a; }
.g-now { width: 2px; background: #b9b9bb; }
.state-panel { flex: 1 1 0; min-height: 0; display: flex; flex-direction: column; background: var(--dark); }
.axis { font: 20px "Liberation Mono", monospace; fill: #e1e1e4; }
.chips { position: relative; display: flex; flex-direction: column; align-items: flex-start; gap: 85px; padding: 16px; }
.chip { height: 43px; display: flex; align-items: center; background: rgba(36, 36, 37, .9); border-radius: 4px; box-shadow: 0 2px 6px #000; font-size: 19px; font-weight: 600; padding-left: 20px; }
.chip button { width: 41px; height: 43px; margin-left: 27px; border-left: 2px solid #29292b; }
.chip svg { width: 22px; height: 22px; }

.right { flex: 180 1 0; min-width: 0; display: flex; flex-direction: column; gap: 4px; overflow: hidden; }
.source, .log { flex: 1 1 0; min-height: 0; background: var(--dark); overflow: hidden; display: flex; flex-direction: column; }
.topics { border-collapse: collapse; width: 100%; table-layout: fixed; white-space: nowrap; border-top: 2px solid var(--line); }
.topics th { text-align: left; background: var(--bar); font-weight: 600; }
.topics th, .topics td { height: 60px; padding: 0 0 0 24px; overflow: hidden; }
.hscroll { margin-top: auto; width: 32px; height: 12px; background: #303031; flex: none; }
.search { height: 78px; border-bottom: 2px solid var(--line); display: flex; align-items: center; padding: 0 18px 2px 8px; gap: 18px; }
.search input { flex: 1; height: 60px; border: 2px solid #4a4a4d; border-radius: 4px; padding: 0 14px; text-overflow: ellipsis; }
.search input::placeholder { color: #8b8b90; opacity: 1; }

/* playback */
.playback { flex: none; height: 156px; border-top: 2px solid var(--line); padding-top: 20px; background: #29292b; }
.timeline { position: relative; height: 36px; margin: 0 16px; }
.timeline input { appearance: none; width: 100%; height: 36px; display: block; }
.timeline input::-webkit-slider-runnable-track { height: 12px; background: #686670; }
.timeline input::-webkit-slider-thumb { appearance: none; width: 4px; height: 36px; margin-top: -12px; background: #ececef; }
.hover { position: absolute; top: 0; width: 4px; height: 36px; margin-left: -2px; background: #f0a500; }
.tip { position: absolute; left: 50%; bottom: 52px; transform: translateX(-50%); background: #34343a; color: #fff; border-radius: 4px; font-size: 22px; line-height: 40px; padding: 0 17px; white-space: nowrap; }
.tip::after { content: ""; position: absolute; left: 50%; top: 100%; margin-left: -10px; border: 10px solid transparent; border-top-color: #34343a; }
.controls { height: 94px; margin-top: 4px; display: grid; grid-template-columns: 1fr auto 1fr; align-items: center; }
.c-left, .c-mid, .c-right { display: flex; align-items: center; }
.c-left { padding-left: 12px; }
.c-left button { width: 68px; height: 56px; }
.clock { margin-left: 22px; font-variant-numeric: tabular-nums slashed-zero; font-size: 23px; }
.c-mid button { width: 76px; height: 56px; }
.c-right { justify-content: flex-end; gap: 54px; padding-right: 44px; }
.speed { font-weight: 600; gap: 12px; color: var(--text); }

.state-tip {
  position: absolute; left: 312px; top: 1274px; width: 1400px;
  display: grid; grid-template-columns: 16px max-content 1fr; column-gap: 12px;
  padding: 8px 20px; border-radius: 4px;
  background: rgba(49, 49, 56, .92); backdrop-filter: blur(12px);
  color: #fff; font-size: 20px; line-height: 34px;
}
.state-tip i { width: 16px; height: 16px; border-radius: 4px; background: #999; margin-top: 8px; }
.state-tip b { font: 700 21px/34px "Liberation Mono", monospace; padding-left: 26px; }
```

FILE: script.js
```js
const NS = "http://www.w3.org/2000/svg";
function add(parent, name, attrs, text) {
  const el = document.createElementNS(NS, name);
  for (const key in attrs) el.setAttribute(key, attrs[key]);
  if (text !== undefined) el.textContent = text;
  parent.appendChild(el);
  return el;
}
const byId = (id) => document.getElementById(id);

// Plot: |sin(t - 0.3315)| sampled every 30 ms
(function () {
  const svg = byId("plot");
  const px = (t) => 1604 + 99.6 * t;
  const py = (v) => 784 - 530 * v;
  const grid = add(svg, "g", { stroke: "#54545c", "stroke-width": 2 });
  [1.05, 1, 0.8, 0.6, 0.4, 0.2, 0, -0.05].forEach((v) => add(grid, "path", { d: `M1588 ${py(v)}H2596` }));
  [0, 2, 4, 6, 8, 9.96].forEach((t) => add(grid, "path", { d: `M${px(t)} ${py(1.05)}V825` }));
  const labels = add(svg, "g", { class: "axis" });
  [["1.05", 1.05], ["0.8", 0.8], ["0.6", 0.6], ["0.4", 0.4], ["0.2", 0.2], ["-0.05", -0.05]].forEach(([s, v]) =>
    add(labels, "text", { x: 1580, y: py(v) + 6, "text-anchor": "end" }, s));
  [["0.0", 0], ["2", 2], ["4", 4], ["6", 6], ["8", 8], ["10.0", 9.96]].forEach(([s, t]) =>
    add(labels, "text", { x: px(t), y: 849, "text-anchor": "middle" }, s));
  let d = "", dots = "";
  for (let i = 0; i <= 332; i++) {
    const t = i * 0.03, v = Math.abs(Math.sin(t - 0.3315));
    const p = px(t).toFixed(1) + " " + py(v).toFixed(1);
    d += (i ? "L" : "M") + p;
    dots += "M" + p + "h0";
  }
  add(svg, "path", { d, fill: "none", stroke: "#e8683f", "stroke-width": 2 });
  add(svg, "path", { d: dots, fill: "none", stroke: "#ff9b73", "stroke-width": 5, "stroke-linecap": "round" });
  add(svg, "path", { d: "M1717 208V862", stroke: "#e8a20c", "stroke-width": 2 });
  add(svg, "path", { d: "M1842 208V862", stroke: "#b4b4b6", "stroke-width": 2 });
})();

// State transitions
(function () {
  const svg = byId("states");
  const px = (t) => 1604 + 119 * t;
  const grid = add(svg, "g", { stroke: "#54545c", "stroke-width": 2 });
  const labels = add(svg, "g", { class: "axis" });
  [["0.0", 0], ["2", 2], ["4", 4], ["6", 6], ["8", 8], ["10.0", 9.966]].forEach(([s, t]) => {
    add(grid, "path", { d: `M${px(t)} 926V1330` });
    add(labels, "text", { x: px(t), y: 1353, "text-anchor": "middle" }, s);
  });
  [1028, 1156].forEach((y) => {
    add(svg, "rect", { x: 1604, y, width: 1181, height: 20, fill: "#999" });
    add(svg, "rect", { x: 2785, y, width: 5, height: 20, fill: "#000" });
    add(labels, "text", { x: 1604, y: y - 8, style: "fill:#8f8f8f" }, "0.32541952239706196, 0.2963094121395243, and others… (Zoom for more)");
    add(labels, "text", { x: 2790, y: y - 8, style: "fill:#4e98e2" }, "0.2041");
  });
  add(svg, "path", { d: "M1739 926V1580", stroke: "#f0a500", "stroke-width": 2 });
  add(svg, "path", { d: "M1889 926V1580", stroke: "#b4b4b6", "stroke-width": 2 });
})();

// Map: trees in the park, scrub in the green strip, one-way arrows
(function () {
  const trees = byId("trees");
  [[847, 157], [738, 190], [873, 222], [813, 246], [855, 287], [722, 317], [799, 320], [885, 332], [829, 373], [767, 380],
   [891, 408], [733, 431], [807, 434], [867, 460], [821, 500], [761, 508], [877, 544], [803, 555], [747, 588], [867, 610],
   [797, 630], [847, 668], [739, 702], [799, 704], [873, 734], [813, 758], [755, 777], [855, 798], [722, 829], [799, 832],
   [829, 884], [867, 968]].forEach(([x, y]) =>
    add(trees, "path", { d: `M${x} ${y + 7}a6.500 7 0 1 1 .1 0zM${x} ${y + 1}v17` }));
  [[736, 1440], [808, 1440], [870, 1468], [823, 1515], [763, 1530]].forEach(([x, y]) =>
    add(trees, "path", { d: `M${x} ${y + 7}a6 7 0 1 1 .1 0zM${x} ${y + 1}v14M${x + 10} ${y + 7}l5-14 5 14z` }));

  const scrub = byId("scrub");
  for (let i = 0; i < 42; i++) {
    const x = 728 + i * 10, y = 1158 + ((i * 17) % 36);
    if (x > 965 && x < 1072) continue;
    add(scrub, "path", { d: `M${x - 6} ${y}h12M${x - 3} ${y - 5}l6 10M${x + 3} ${y - 5}l-6 10` });
  }

  const arrows = byId("arrows");
  const brown = "#553b00", grey = "#555";
  [[974, 166, 165], [985, 199, 180], [1047, 178, 0], [956, 520, 184], [989, 559, 180], [1045, 538, 0], [1078, 554, 0],
   [1088, 748, 0], [930, 879, 180], [988, 900, 180], [1045, 856, 0], [1163, 859, -60], [1203, 1049, -84], [1290, 1062, -92],
   [1480, 1105, -90], [1120, 1111, -90], [841, 1111, -90], [1049, 1196, 0], [910, 1221, 90], [1270, 1213, 90],
   [1377, 1267, 90], [1140, 1472, 10], [1167, 1516, 16, grey], [1405, 160, 180, grey], [1431, 307, 0, grey],
   [1411, 520, 180, grey], [1437, 666, 0, grey], [1390, 847, -90, grey], [1500, 1456, 90, grey]].forEach(([x, y, a, c]) =>
    add(arrows, "path", { transform: `translate(${x} ${y}) rotate(${a})`, fill: c || brown, d: "M0-12L5-1H1V12H-1V-1H-5z" }));
})();
```
